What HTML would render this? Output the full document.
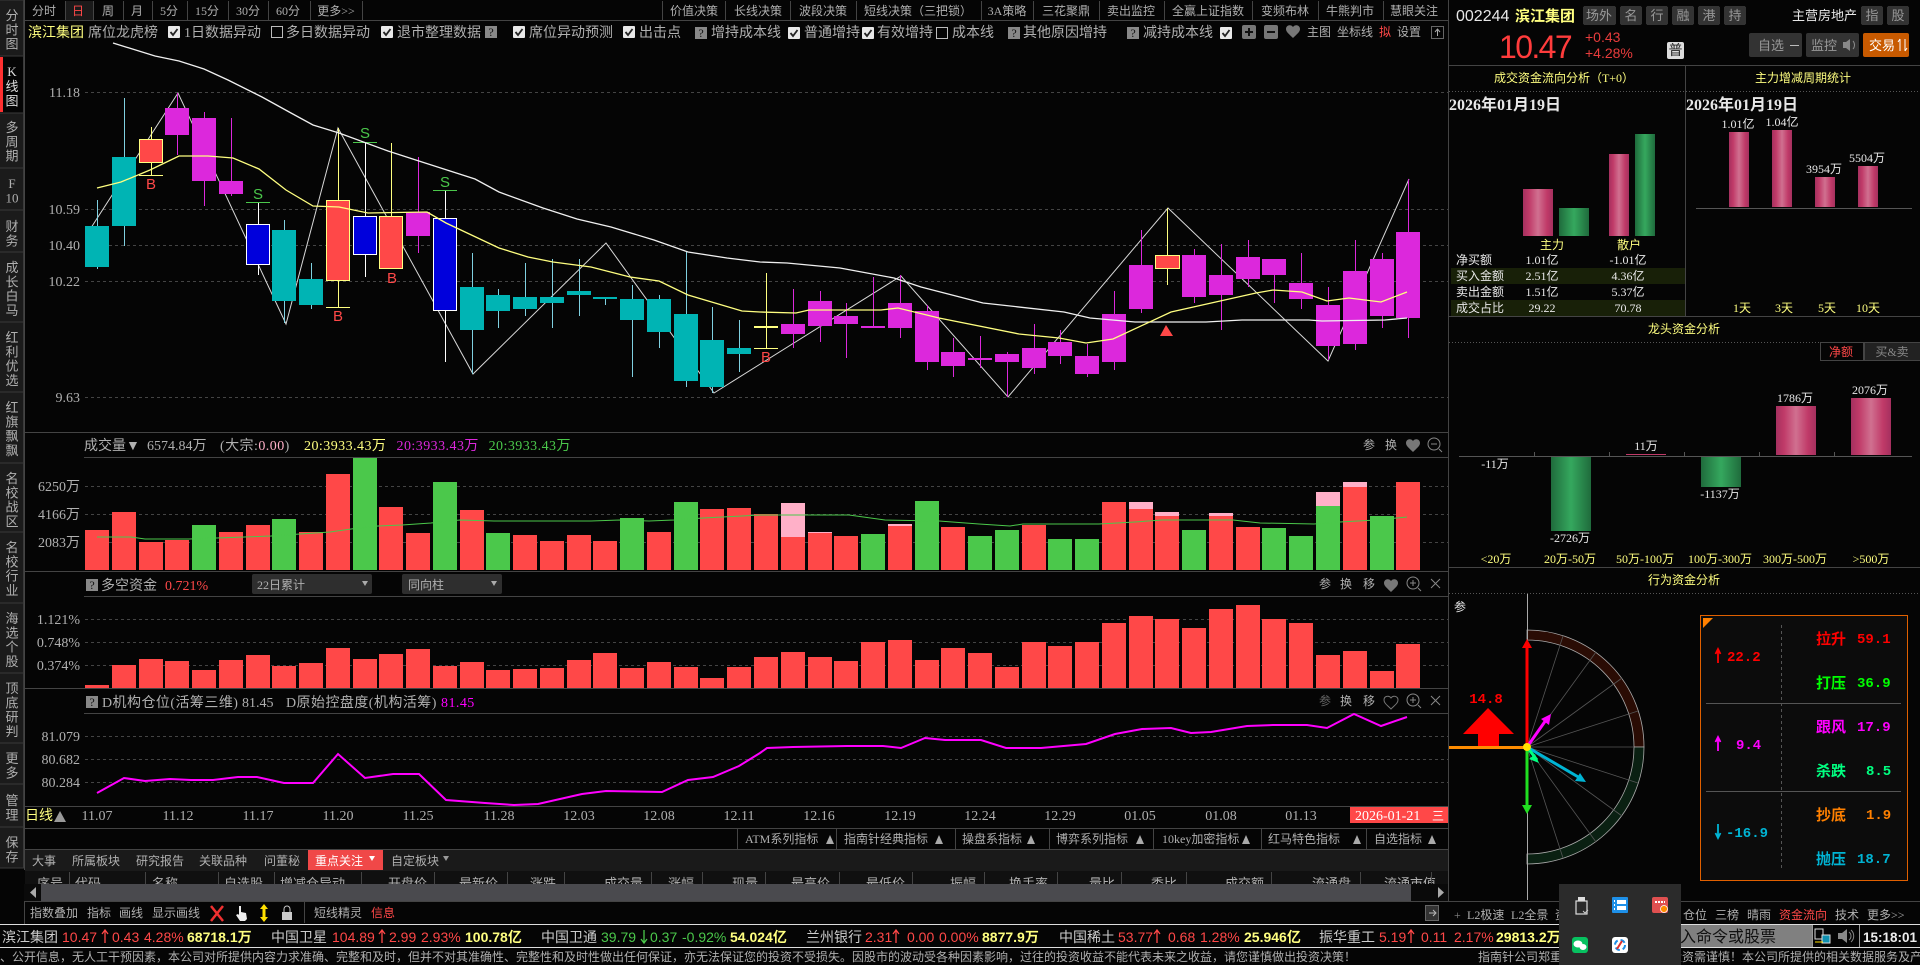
<!DOCTYPE html>
<html lang="zh"><head><meta charset="utf-8"><title>滨江集团</title>
<style>
html,body{margin:0;padding:0;background:#050505;overflow:hidden}
svg{display:block;font-family:"Liberation Serif","WenQuanYi Zen Hei","Noto Sans CJK SC",serif;font-size:14px}
.ce{text-anchor:middle}.en{text-anchor:end}
.g{fill:#b0b0b0}.y{fill:#ffff80}.w{fill:#e8e8e8}.r{fill:#ff4848}
.s12{font-size:12px}.s13{font-size:13px}.s14{font-size:14px}
.sa{font-family:"Liberation Sans","WenQuanYi Zen Hei","Noto Sans CJK SC",sans-serif}
.mo{font-family:"Liberation Mono","WenQuanYi Zen Hei","Noto Sans CJK SC",monospace;font-weight:bold}
.b{font-weight:bold}
.ls{letter-spacing:.45px}
.c{shape-rendering:crispEdges}
.ln{stroke:#444;stroke-width:1;shape-rendering:crispEdges;fill:none}
.gd{stroke:#444;stroke-width:1;stroke-dasharray:3 3;shape-rendering:crispEdges;fill:none}
</style></head><body>
<svg width="1920" height="965" viewBox="0 0 1920 965" xmlns="http://www.w3.org/2000/svg">
<defs>
<linearGradient id="gr"><stop offset="0" stop-color="#a5305f"/><stop offset=".2" stop-color="#c03a68"/><stop offset=".5" stop-color="#d07090"/><stop offset=".8" stop-color="#c03a68"/><stop offset="1" stop-color="#a5305f"/></linearGradient>
<linearGradient id="gg"><stop offset="0" stop-color="#1f6b3c"/><stop offset=".5" stop-color="#35a85e"/><stop offset="1" stop-color="#1f6b3c"/></linearGradient>
<symbol id="ck" width="12" height="12" viewBox="0 0 12 12"><rect width="12" height="12" rx="1" fill="#e8e8e8"/><path d="M2.5 6l2.5 3 4.500-6" stroke="#222" stroke-width="1.800" fill="none"/></symbol>
<symbol id="ub" width="12" height="12" viewBox="0 0 12 12"><rect x=".5" y=".5" width="11" height="11" fill="none" stroke="#bbb"/></symbol>
<symbol id="ar" width="8" height="14" viewBox="0 0 8 14"><path d="M4 14V1M1 5l3-4 3 4" stroke="#ff4848" stroke-width="1.300" fill="none"/></symbol>
<clipPath id="hc"><rect x="24" y="871" width="1424" height="13"/></clipPath>
</defs>
<rect width="1920" height="965" fill="#050505"/>

<!-- left sidebar -->
<g class="c" fill="#1b1b1b" stroke="#3a3a3a">
<rect x="-1" y="0" width="24.500" height="56"/><rect x="-1" y="56" width="24.500" height="57" fill="#050505"/><rect x="-1" y="113" width="24.500" height="55"/><rect x="-1" y="168" width="24.500" height="42"/><rect x="-1" y="210" width="24.500" height="42"/><rect x="-1" y="252" width="24.500" height="70"/><rect x="-1" y="322" width="24.500" height="70"/><rect x="-1" y="392" width="24.500" height="71"/><rect x="-1" y="463" width="24.500" height="69"/><rect x="-1" y="532" width="24.500" height="71"/><rect x="-1" y="603" width="24.500" height="70"/><rect x="-1" y="673" width="24.500" height="70"/><rect x="-1" y="743" width="24.500" height="41"/><rect x="-1" y="784" width="24.500" height="43"/><rect x="-1" y="827" width="24.500" height="41"/>
</g>
<rect x="0" y="57" width="3" height="55" fill="#ff3030"/>
<g class="s13 ce g">
<text x="12" y="20">分<tspan x="12" dy="14.300">时</tspan><tspan x="12" dy="14.300">图</tspan></text>
<text x="12" y="76" style="fill:#ddd">K<tspan x="12" dy="15">线</tspan><tspan x="12" dy="14.300">图</tspan></text>
<text x="12" y="132">多<tspan x="12" dy="14.300">周</tspan><tspan x="12" dy="14.300">期</tspan></text>
<text x="12" y="188">F<tspan x="12" dy="14.300">10</tspan></text>
<text x="12" y="231">财<tspan x="12" dy="14.300">务</tspan></text>
<text x="12" y="272">成<tspan x="12" dy="14.300">长</tspan><tspan x="12" dy="14.300">白</tspan><tspan x="12" dy="14.300">马</tspan></text>
<text x="12" y="342">红<tspan x="12" dy="14.300">利</tspan><tspan x="12" dy="14.300">优</tspan><tspan x="12" dy="14.300">选</tspan></text>
<text x="12" y="412">红<tspan x="12" dy="14.300">旗</tspan><tspan x="12" dy="14.300">飘</tspan><tspan x="12" dy="14.300">飘</tspan></text>
<text x="12" y="483">名<tspan x="12" dy="14.300">校</tspan><tspan x="12" dy="14.300">战</tspan><tspan x="12" dy="14.300">区</tspan></text>
<text x="12" y="552">名<tspan x="12" dy="14.300">校</tspan><tspan x="12" dy="14.300">行</tspan><tspan x="12" dy="14.300">业</tspan></text>
<text x="12" y="623">海<tspan x="12" dy="14.300">选</tspan><tspan x="12" dy="14.300">个</tspan><tspan x="12" dy="14.300">股</tspan></text>
<text x="12" y="693">顶<tspan x="12" dy="14.300">底</tspan><tspan x="12" dy="14.300">研</tspan><tspan x="12" dy="14.300">判</tspan></text>
<text x="12" y="763">更<tspan x="12" dy="14.300">多</tspan></text>
<text x="12" y="805">管<tspan x="12" dy="14.300">理</tspan></text>
<text x="12" y="847">保<tspan x="12" dy="14.300">存</tspan></text>
</g>

<!-- top toolbar -->
<path class="ln" d="M24 20.500H1448M24.500 0V870M65.500 1V20M93.500 1V20M123.500 1V20M152.500 1V20M187.500 1V20M228.500 1V20M268.500 1V20M310.500 1V20M362.500 1V20M662.500 1V20M725.500 1V20M790.500 1V20M856.500 1V20M981.500 1V20M1033.500 1V20M1099.500 1V20M1164.500 1V20M1252.500 1V20M1318.500 1V20M1383.500 1V20M1448.500 0V901"/>
<rect x="66" y="1" width="27" height="19" fill="#1a1a1a" class="c"/>
<g class="s12 g ce">
<text x="44" y="15">分时</text><text x="78" y="15" style="fill:#ff4848">日</text><text x="108" y="15">周</text><text x="137" y="15">月</text><text x="169" y="15">5分</text><text x="207" y="15">15分</text><text x="248" y="15">30分</text><text x="288" y="15">60分</text><text x="336" y="15">更多&gt;&gt;</text>
<text x="694" y="15">价值决策</text><text x="758" y="15">长线决策</text><text x="823" y="15">波段决策</text><text x="918" y="15">短线决策（三把锁）</text><text x="1007" y="15">3A策略</text><text x="1066" y="15">三花聚鼎</text><text x="1131" y="15">卖出监控</text><text x="1208" y="15">全赢上证指数</text><text x="1285" y="15">变频布林</text><text x="1350" y="15">牛熊判市</text><text x="1414" y="15">慧眼关注</text>
</g>

<!-- option row -->
<g class="s14 g">
<text x="28" y="37" style="fill:#ffff80">滨江集团</text>
<text x="88" y="37">席位龙虎榜</text>
<text x="184" y="37">1日数据异动</text>
<text x="286" y="37">多日数据异动</text>
<text x="397" y="37">退市整理数据</text>
<text x="529" y="37">席位异动预测</text>
<text x="639" y="37">出击点</text>
<text x="711" y="37">增持成本线</text>
<text x="804" y="37">普通增持</text>
<text x="877" y="37">有效增持</text>
<text x="952" y="37">成本线</text>
<text x="1023" y="37">其他原因增持</text>
<text x="1143" y="37">减持成本线</text>
</g>
<use href="#ck" x="168" y="26"/><use href="#ub" x="271" y="26"/><use href="#ck" x="381" y="26"/><use href="#ck" x="513" y="26"/><use href="#ck" x="623" y="26"/><use href="#ck" x="788" y="27"/><use href="#ck" x="862" y="27"/><use href="#ub" x="936" y="27"/><use href="#ck" x="1220" y="27"/>
<g class="c" fill="#888"><rect x="485" y="26" width="12" height="12"/><rect x="695" y="27" width="12" height="12"/><rect x="1008" y="27" width="12" height="12"/><rect x="1127" y="27" width="12" height="12"/></g>
<g class="s12 ce" fill="#111"><text x="491" y="36">?</text><text x="701" y="37">?</text><text x="1014" y="37">?</text><text x="1133" y="37">?</text></g>
<rect x="1242" y="25" width="14" height="14" rx="2" fill="#777"/><path d="M1249 28v8M1245 32h8" stroke="#111" stroke-width="2"/>
<rect x="1264" y="25" width="14" height="14" rx="2" fill="#777"/><path d="M1267 32h8" stroke="#111" stroke-width="2"/>
<path d="M1293 38c-4-4-7-6-7-9 0-4 5-5 7-2 2-3 7-2 7 2 0 3-3 5-7 9z" fill="#777"/>
<g class="s12 g"><text x="1307" y="36">主图</text><text x="1337" y="36">坐标线</text><text x="1379" y="36" style="fill:#ff4848">拟</text><text x="1397" y="36">设置</text></g>
<rect x="1431.500" y="26.500" width="12" height="12" fill="none" stroke="#666" class="c"/><path d="M1437.500 36v-6M1435 32l2.500-3 2.500 3" stroke="#aaa" fill="none"/>

<!-- main chart grid -->
<path class="gd" d="M85 92.500H1448M85 209.500H1448M85 245.500H1448M85 281.500H1448M85 397.500H1448"/>
<g class="s14 g en"><text x="80" y="97">11.18</text><text x="80" y="214">10.59</text><text x="80" y="250">10.40</text><text x="80" y="286">10.22</text><text x="80" y="402">9.63</text></g>

<!-- zigzag -->
<polyline fill="none" stroke="#d8d8d8" stroke-width="1" points="87,234 178,93 286,324 338,128 473,374 606,243 714,393 901,276 1008,397 1168,208 1328,361 1409,179"/>

<!-- candles -->
<g class="c">
<path stroke="#7fd0e0" fill="none" d="M97.500 200V269M124.500 98V246M284.500 220V323M311.500 263V309M472.500 253V374M498.500 289V328M525.500 263V316M552.500 259V328M579.500 259V316M605.500 297V305M632.500 285V377M659.500 295V348M686.500 251V387M712.500 307V393M739.500 320V372"/>
<path fill="#00b4b4" d="M85 226h24v41h-24zM112 157h24v69h-24zM272 230h24v71h-24zM299 279h24v26h-24zM460 287h24v43h-24zM486 295h24v16h-24zM513 297h24v12h-24zM540 297h24v6h-24zM567 291h24v4h-24zM593 297h24v2h-24zM620 299h24v21h-24zM647 299h24v33h-24zM674 314h24v67h-24zM700 340h24v47h-24zM727 348h24v6h-24z"/>
<path stroke="#dc28dc" fill="none" d="M177.500 93V155M204.500 112V206M231.500 118V196M418.500 157V253M793.500 289V348M820.500 291V342M846.500 303V358M873.500 277V328M900.500 275V338M927.500 305V370M953.500 338V377M980.500 336V368M1007.500 352V397M1034.500 324V374M1060.500 330V364M1087.500 344V377M1114.500 291V370M1141.500 230V313M1194.500 249V303M1221.500 244V330M1248.500 240V287M1274.500 259V303M1301.500 253V309M1328.500 287V360M1355.500 240V350M1382.500 253V328M1408.500 179V338"/>
<path fill="#dc28dc" d="M165 108h24v27h-24zM192 118h24v63h-24zM219 181h24v13h-24zM406 212h24v24h-24zM781 324h24v10h-24zM808 301h24v25h-24zM834 316h24v8h-24zM861 326h24v2h-24zM888 303h24v25h-24zM915 311h24v51h-24zM941 352h24v14h-24zM968 358h24v2h-24zM995 354h24v8h-24zM1022 348h24v20h-24zM1048 342h24v14h-24zM1075 356h24v18h-24zM1102 314h24v48h-24zM1129 265h24v44h-24zM1182 255h24v42h-24zM1209 275h24v20h-24zM1236 257h24v22h-24zM1262 259h24v16h-24zM1289 283h24v16h-24zM1316 305h24v41h-24zM1343 271h24v73h-24zM1370 259h24v57h-24zM1396 232h24v86h-24z"/>
<path stroke="#fff" fill="none" d="M258.500 202V275M365.500 142V277M445.500 190V362"/>
<g fill="#0000dc" stroke="#fff"><rect x="246.500" y="224.500" width="23" height="40"/><rect x="353.500" y="216.500" width="23" height="38"/><rect x="433.500" y="218.500" width="23" height="92"/></g>
<path stroke="#ffff80" fill="none" d="M151.500 127V175M338.500 128V307M391.500 143V269M766.500 273V348M1167.500 208V285M139 175.500h24M326 307.500h24M754 348.500h24"/>
<g fill="#ff4848" stroke="#ffff80"><rect x="139.500" y="139.500" width="23" height="23"/><rect x="326.500" y="200.500" width="23" height="80"/><rect x="379.500" y="216.500" width="23" height="52"/><rect x="1155.500" y="255.500" width="24" height="13"/></g>
<path stroke="#ffff80" stroke-width="2" d="M754 327h24"/>
<path stroke="#4bc84b" d="M246 202.500h24M353 142.500h24M433 190.500h24"/>
</g>
<polyline fill="none" stroke="#f0f0f0" stroke-width="1.300" points="113,43 155,56 179,61 204,69 228,80 262,97 291,113 313,125 339,133 388,151 422,162 475,179 499,192 543,208 577,219 611,227 654,240 688,252 727,258 760,262 787,263 840,268 894,278 921,287 983,303 1064,312 1090,318 1135,322 1206,322 1242,320 1309,320 1322,321 1385,320 1407,318"/>
<polyline fill="none" stroke="#ffff80" stroke-width="1.300" points="97,188 121,182 150,170 179,156 208,156 233,158 259,169 286,190 313,206 339,207 368,213 427,212 446,223 499,248 528,257 553,262 591,267 630,277 659,281 688,295 742,311 760,312 796,313 809,310 881,310 898,308 939,318 1019,334 1059,338 1086,343 1113,339 1171,312 1256,293 1273,290 1302,292 1327,301 1349,298 1381,302 1407,292"/>
<g class="sa ce" style="font-size:15px">
<text x="151" y="189" fill="#ff4848">B</text><text x="338" y="321" fill="#ff4848">B</text><text x="392" y="283" fill="#ff4848">B</text><text x="766" y="362" fill="#ff4848">B</text>
<text x="258" y="199" fill="#4bc84b">S</text><text x="365" y="138" fill="#4bc84b">S</text><text x="445" y="187" fill="#4bc84b">S</text>
</g>
<path d="M1166 325l7 11h-13z" fill="#ff4848"/>

<!-- panel borders -->
<path class="ln" d="M24 432.500H1448M84 457.500H1448M24 571.500H1448M84 596.500H1448M24 688.500H1448M84 713.500H1448M24 806.500H1448M24 828.500H1448M24 849.500H1448"/>

<!-- volume panel -->
<path class="gd" d="M85 486.500H1448M85 514.500H1448M85 542.500H1448"/>
<g class="s14">
<text x="84" y="450" class="g">成交量▼</text>
<text x="147" y="450" class="g">6574.84万</text>
<text x="220" y="450" class="g ls">(大宗:<tspan fill="#ffb0c8" style="fill:#ffb0c8">0.00</tspan>)</text>
<text x="304" y="450" class="y ls">20:3933.43万</text>
<text x="396.500" y="450" fill="#dc28dc" class="ls">20:3933.43万</text>
<text x="488.600" y="450" fill="#4bc84b" class="ls">20:3933.43万</text>
</g>
<g class="s14 g en"><text x="80" y="491">6250万</text><text x="80" y="519">4166万</text><text x="80" y="547">2083万</text></g>
<g class="c">
<path fill="#ff4848" d="M85 530h24v40h-24zM112 512h24v58h-24zM139 542h24v28h-24zM165 540h24v30h-24zM219 532h24v38h-24zM246 525h24v45h-24zM299 532h24v38h-24zM326 474h24v96h-24zM379 507h24v63h-24zM406 533h24v37h-24zM460 510h24v60h-24zM513 535h24v35h-24zM540 541h24v29h-24zM567 535h24v35h-24zM593 541h24v29h-24zM647 532h24v38h-24zM700 509h24v61h-24zM727 508h24v62h-24zM754 514h24v56h-24zM781 537h24v33h-24zM808 533h24v37h-24zM834 536h24v34h-24zM888 526h24v44h-24zM941 527h24v43h-24zM1022 525h24v45h-24zM1102 502h24v68h-24zM1129 509h24v61h-24zM1155 516h24v54h-24zM1209 516h24v54h-24zM1236 527h24v43h-24zM1343 487h24v83h-24zM1396 482h24v88h-24z"/>
<path fill="#4bc84b" d="M192 525h24v45h-24zM272 519h24v51h-24zM353 458h24v112h-24zM433 482h24v88h-24zM486 533h24v37h-24zM620 518h24v52h-24zM674 502h24v68h-24zM861 534h24v36h-24zM915 501h24v69h-24zM968 536h24v34h-24zM995 530h24v40h-24zM1048 539h24v31h-24zM1075 539h24v31h-24zM1182 530h24v40h-24zM1262 528h24v42h-24zM1289 536h24v34h-24zM1316 506h24v64h-24zM1370 516h24v54h-24z"/>
<path fill="#ffb0c8" d="M781 503h24v34h-24zM808 532h24v1h-24zM888 524h24v2h-24zM1129 502h24v7h-24zM1155 512h24v4h-24zM1209 513h24v3h-24zM1316 492h24v14h-24zM1343 482h24v5h-24z"/>
</g>
<polyline fill="none" stroke="#4bc84b" stroke-width="1" points="97,537 131,537 145,539 189,539 271,536 300,534 330,532 351,529 378,526 402,525 431,523 460,520 494,521 591,521 620,520 649,521 674,520 703,518 742,516 760,515 849,515 885,520 939,521 979,524 1010,526 1023,524 1099,524 1135,522 1162,520 1233,520 1260,523 1314,524 1340,522 1376,520 1407,517"/>

<!-- 多空资金 panel -->
<rect x="86" y="579" width="12" height="12" fill="#888" class="c"/><text x="92" y="589" class="s12 ce" fill="#111">?</text>
<text x="101" y="590" class="g s14">多空资金</text>
<text x="165" y="590" class="r s14">0.721%</text>
<rect x="252" y="574" width="120" height="20" rx="2" fill="#2e2e2e"/><text x="257" y="589" class="s12 g">22日累计</text><path d="M362 581l6 0-3 5z" fill="#aaa"/>
<rect x="402" y="574" width="100" height="20" rx="2" fill="#2e2e2e"/><text x="408" y="589" class="s12 g">同向柱</text><path d="M491 581l6 0-3 5z" fill="#aaa"/>
<path class="gd" d="M85 619.500H1448M85 642.500H1448M85 665.500H1448"/>
<g class="s14 g en"><text x="80" y="624">1.121%</text><text x="80" y="647">0.748%</text><text x="80" y="670">0.374%</text></g>
<path class="c" fill="#ff4848" d="M85 685h24v3h-24zM112 665h24v23h-24zM139 659h24v29h-24zM165 661h24v27h-24zM192 670h24v18h-24zM219 660h24v28h-24zM246 655h24v33h-24zM272 666h24v22h-24zM299 663h24v25h-24zM326 648h24v40h-24zM353 659h24v29h-24zM379 654h24v34h-24zM406 649h24v39h-24zM433 666h24v22h-24zM460 662h24v26h-24zM486 670h24v18h-24zM513 669h24v19h-24zM540 668h24v20h-24zM567 660h24v28h-24zM593 653h24v35h-24zM620 668h24v20h-24zM647 662h24v26h-24zM674 667h24v21h-24zM700 678h24v10h-24zM727 667h24v21h-24zM754 657h24v31h-24zM781 652h24v36h-24zM808 657h24v31h-24zM834 661h24v27h-24zM861 642h24v46h-24zM888 640h24v48h-24zM915 660h24v28h-24zM941 648h24v40h-24zM968 653h24v35h-24zM995 667h24v21h-24zM1022 642h24v46h-24zM1048 646h24v42h-24zM1075 642h24v46h-24zM1102 623h24v65h-24zM1129 616h24v72h-24zM1155 619h24v69h-24zM1182 628h24v60h-24zM1209 609h24v79h-24zM1236 605h24v83h-24zM1262 619h24v69h-24zM1289 623h24v65h-24zM1316 655h24v33h-24zM1343 651h24v37h-24zM1370 671h24v17h-24zM1396 644h24v44h-24z"/>

<!-- D panel -->
<rect x="86" y="696" width="12" height="12" fill="#888" class="c"/><text x="92" y="706" class="s12 ce" fill="#111">?</text>
<text x="102" y="707" class="g s14 ls">D机构仓位(活筹三维)</text><text x="242" y="707" class="g s14">81.45</text><text x="286" y="707" class="g s14 ls">D原始控盘度(机构活筹)</text><text x="441" y="707" class="s14 ls" fill="#ff00ff">81.45</text>
<path class="gd" d="M85 736.500H1448M85 759.500H1448M85 782.500H1448"/>
<g class="s14 g en"><text x="80" y="741">81.079</text><text x="80" y="764">80.682</text><text x="80" y="787">80.284</text></g>
<polyline fill="none" stroke="#ff00ff" stroke-width="2" points="97,793 124,778 145,781 170,779 191,780 213,780 238,777 257,777 284,783 313,783 338,754 365,778 393,774 419,774 446,800 485,803 514,805 538,804 582,794 606,791 662,792 688,780 713,777 739,766 760,753 767,748 793,747 847,746 883,746 901,748 925,738 945,740 981,740 1006,748 1041,748 1086,744 1115,734 1142,729 1171,728 1191,733 1211,732 1247,726 1273,725 1307,725 1327,728 1354,714 1381,726 1407,717"/>

<!-- header side icons -->
<g class="s12 g ce">
<text x="1369" y="449">参</text><text x="1391" y="449">换</text>
<text x="1325" y="588">参</text><text x="1346" y="588">换</text><text x="1369" y="588">移</text>
<text x="1325" y="705" style="fill:#666">参</text><text x="1346" y="705">换</text><text x="1369" y="705">移</text>
</g>
<path d="M1413 452c-4-4-7-6-7-9 0-4 5-5 7-2 2-3 7-2 7 2 0 3-3 5-7 9zM1391 592c-4-4-7-6-7-9 0-4 5-5 7-2 2-3 7-2 7 2 0 3-3 5-7 9z" fill="#777"/>
<path d="M1391 709c-4-4-7-6-7-9 0-4 5-5 7-2 2-3 7-2 7 2 0 3-3 5-7 9z" fill="none" stroke="#777"/>
<g fill="none" stroke="#888">
<circle cx="1434" cy="444" r="6"/><path d="M1431 444h6M1439 449l3 3"/>
<circle cx="1413" cy="583" r="6"/><path d="M1410 583h6M1413 580v6M1418 588l3 3"/>
<circle cx="1413" cy="700" r="6"/><path d="M1410 700h6M1413 697v6M1418 705l3 3"/>
<path d="M1431 579l9 9M1440 579l-9 9M1431 696l9 9M1440 696l-9 9"/>
</g>

<!-- date axis -->
<text x="25" y="820" class="y s14">日线</text><path d="M60 811l6 11h-12z" fill="#999"/>
<g class="s14 g ce">
<text x="97" y="820">11.07</text><text x="178" y="820">11.12</text><text x="258" y="820">11.17</text><text x="338" y="820">11.20</text><text x="418" y="820">11.25</text><text x="499" y="820">11.28</text><text x="579" y="820">12.03</text><text x="659" y="820">12.08</text><text x="739" y="820">12.11</text><text x="819" y="820">12.16</text><text x="900" y="820">12.19</text><text x="980" y="820">12.24</text><text x="1060" y="820">12.29</text><text x="1140" y="820">01.05</text><text x="1221" y="820">01.08</text><text x="1301" y="820">01.13</text>
</g>
<rect x="1350" y="807" width="98" height="16" fill="#ff4848" class="c"/><text x="1355" y="820" class="s14" fill="#fff">2026-01-21</text><text x="1438" y="820" class="s12 ce" fill="#fff">三</text>

<!-- indicator row -->
<path class="ln" d="M737.500 829V849M836.500 829V849M955.500 829V849M1049.500 829V849M1153.500 829V849M1261.500 829V849M1366.500 829V849"/>
<g class="s12 g">
<text x="745" y="843">ATM系列指标</text><text x="844" y="843">指南针经典指标</text><text x="962" y="843">操盘系指标</text><text x="1056" y="843">博弈系列指标</text><text x="1162" y="843">10key加密指标</text><text x="1268" y="843">红马特色指标</text><text x="1374" y="843">自选指标</text>
</g>
<path fill="#aaa" d="M826 844l4-9 4 9zM935 844l4-9 4 9zM1027 844l4-9 4 9zM1136 844l4-9 4 9zM1242 844l4-9 4 9zM1353 844l4-9 4 9zM1428 844l4-9 4 9z"/>

<!-- tabs row -->
<rect x="25" y="850" width="1423" height="21" fill="#1a1a1a" class="c"/>
<rect x="308" y="850" width="75" height="20" fill="#f04848" class="c"/>
<g class="s12 g"><text x="32" y="865">大事</text><text x="72" y="865">所属板块</text><text x="136" y="865">研究报告</text><text x="199" y="865">关联品种</text><text x="264" y="865">问董秘</text><text x="315" y="865" style="fill:#fff">重点关注</text><text x="391" y="865">自定板块</text></g>
<path d="M369 856h6l-3 5z" fill="#fff"/><path d="M443 856h6l-3 5z" fill="#999"/>

<!-- table header -->
<rect x="25" y="871" width="1423" height="13" fill="#101010" class="c"/>
<g clip-path="url(#hc)" class="s13 g">
<text x="37" y="888">序号</text><text x="75" y="888">代码</text><text x="152" y="888">名称</text><text x="224" y="888">自选股</text><text x="280" y="888">增减仓异动</text><text x="388" y="888">开盘价</text><text x="459" y="888">最新价</text><text x="530" y="888">涨跌</text><text x="604" y="888">成交量</text><text x="668" y="888">涨幅</text><text x="732" y="888">现量</text><text x="791" y="888">最高价</text><text x="866" y="888">最低价</text><text x="950" y="888">振幅</text><text x="1009" y="888">换手率</text><text x="1089" y="888">量比</text><text x="1151" y="888">委比</text><text x="1225" y="888">成交额</text><text x="1312" y="888">流通盘</text><text x="1384" y="888">流通市值</text>
</g>
<path class="ln" d="M69.500 872V884M145.500 872V884M218.500 872V884M274.500 872V884M361.500 872V884M434.500 872V884M507.500 872V884M564.500 872V884M651.500 872V884M702.500 872V884M765.500 872V884M839.500 872V884M912.500 872V884M984.500 872V884M1057.500 872V884M1121.500 872V884M1186.500 872V884M1271.500 872V884M1360.500 872V884M1431.500 872V884"/>

<!-- scrollbar -->
<rect x="24" y="884" width="1424" height="17" fill="#4a4a4e" class="c"/>
<rect x="24" y="884" width="17" height="17" fill="#0a0a0a" class="c"/><path d="M36 887v11l-6-5.500z" fill="#aaa"/>
<rect x="1411" y="884" width="37" height="17" fill="#0a0a0a" class="c"/><path d="M1438 887v11l6-5.500z" fill="#aaa"/>

<!-- bottom tool row -->
<path class="ln" d="M24 901.500H1920M304.500 902V923M24.500 901V924"/>
<g class="s12 g"><text x="30" y="917">指数叠加</text><text x="87" y="917">指标</text><text x="119" y="917">画线</text><text x="152" y="917">显示画线</text><text x="314" y="917">短线精灵</text><text x="371" y="917" style="fill:#ff4848">信息</text></g>
<path d="M211 906l12 15M223 906l-12 15" stroke="#f03030" stroke-width="2.500"/>
<path d="M239 906h2v6l5 1 1 6-2 2h-5l-4-6 2-1 1 1z" fill="#eee"/>
<path d="M264 904l4 5h-2.500v8h2.500l-4 5-4-5h2.500v-8h-2.500z" fill="#ffe000"/>
<rect x="282" y="912" width="10" height="8" fill="#ccc"/><path d="M284 912v-3a3 3 0 0 1 6 0v3" fill="none" stroke="#ccc"/>
<rect x="1425.500" y="905.500" width="13" height="15" fill="#333" stroke="#666" class="c"/><path d="M1429 913h6M1433 910l3 3-3 3" stroke="#bbb" fill="none"/>

<!-- L2 row -->
<g class="s12 g">
<text x="1454" y="919" style="fill:#888">+</text><text x="1467" y="919">L2极速</text><text x="1511" y="919">L2全景</text><text x="1555" y="919">资金</text><text x="1683" y="919">仓位</text><text x="1715" y="919">三榜</text><text x="1747" y="919">晴雨</text><text x="1779" y="919" style="fill:#ff4848">资金流向</text><text x="1835" y="919">技术</text><text x="1867" y="919">更多&gt;&gt;</text>
</g>

<!-- ticker -->
<path class="c" stroke="#ddd" d="M0 924.500H1920M0 947.500H1920"/>
<g class="s14 sa" fill="#ff4848">
<text x="2" y="942" fill="#ccc">滨江集团</text><text x="62" y="942">10.47</text><text x="112" y="942">0.43</text><text x="144" y="942">4.28%</text><text x="187" y="942" fill="#ffff80" class="b">68718.1万</text>
<text x="271" y="942" fill="#ccc">中国卫星</text><text x="332" y="942">104.89</text><text x="389" y="942">2.99</text><text x="421" y="942">2.93%</text><text x="465" y="942" fill="#ffff80" class="b">100.78亿</text>
<text x="541" y="942" fill="#ccc">中国卫通</text><text x="601" y="942" fill="#4bc84b">39.79</text><text x="650" y="942" fill="#4bc84b">0.37</text><text x="682" y="942" fill="#4bc84b">-0.92%</text><text x="730" y="942" fill="#ffff80" class="b">54.024亿</text>
<text x="806" y="942" fill="#ccc">兰州银行</text><text x="865" y="942">2.31</text><text x="907" y="942">0.00</text><text x="939" y="942">0.00%</text><text x="982" y="942" fill="#ffff80" class="b">8877.9万</text>
<text x="1059" y="942" fill="#ccc">中国稀土</text><text x="1118" y="942">53.77</text><text x="1168" y="942">0.68</text><text x="1200" y="942">1.28%</text><text x="1244" y="942" fill="#ffff80" class="b">25.946亿</text>
<text x="1319" y="942" fill="#ccc">振华重工</text><text x="1379" y="942">5.19</text><text x="1421" y="942">0.11</text><text x="1454" y="942">2.17%</text><text x="1496" y="942" fill="#ffff80" class="b">29813.2万</text>
</g>
<use href="#ar" x="101" y="929"/><use href="#ar" x="378" y="929"/><use href="#ar" x="892" y="929"/><use href="#ar" x="1153" y="929"/><use href="#ar" x="1407" y="929"/>
<path d="M644 943V930M641 939l3 4 3-4" stroke="#4bc84b" stroke-width="1.300" fill="none"/>

<!-- marquee -->
<g class="s12 g">
<text x="0" y="961">、公开信息，无人工干预因素，本公司对所提供内容力求准确、完整和及时，但并不对其准确性、完整性和及时性做出任何保证，亦无法保证您的投资不受损失。因股市的波动受各种因素影响，过往的投资收益不能代表未来之收益，请您谨慎做出投资决策！</text>
<text x="1478" y="961">指南针公司郑重提示：股市有风险，投资需谨慎！本公司所提供的相关数据服务及产</text>
</g>

<!-- right panel header -->
<text x="1456" y="21" class="sa w" style="font-size:16px">002244</text>
<text x="1515" y="21" class="y b" style="font-size:15px">滨江集团</text>
<g class="c" fill="#333"><rect x="1583" y="6" width="33" height="19" rx="2"/><rect x="1620" y="6" width="22" height="19" rx="2"/><rect x="1646" y="6" width="22" height="19" rx="2"/><rect x="1672" y="6" width="22" height="19" rx="2"/><rect x="1698" y="6" width="22" height="19" rx="2"/><rect x="1724" y="6" width="22" height="19" rx="2"/><rect x="1861" y="6" width="22" height="19" rx="2"/><rect x="1887" y="6" width="22" height="19" rx="2"/></g>
<g class="s13 ce" fill="#999"><text x="1599" y="20">场外</text><text x="1631" y="20">名</text><text x="1657" y="20">行</text><text x="1683" y="20">融</text><text x="1709" y="20">港</text><text x="1735" y="20">持</text><text x="1872" y="20">指</text><text x="1898" y="20">股</text></g>
<text x="1792" y="20" class="s13 w">主营房地产</text>
<text x="1499" y="58" class="sa" fill="#ff3c3c" style="font-size:32px;letter-spacing:-1.600px">10.47</text>
<text x="1585" y="42" class="sa s14" fill="#e83c3c">+0.43</text><text x="1585" y="58" class="sa s14" fill="#e83c3c">+4.28%</text>
<rect x="1667" y="42" width="17" height="17" rx="2" fill="#ddd"/><text x="1675.500" y="55" class="s14 ce" fill="#222">普</text>
<rect x="1749" y="33" width="53" height="24" rx="2" fill="#333"/><text x="1758" y="50" class="s13" fill="#999">自选</text><path d="M1790 45.500h9" stroke="#bbb"/>
<rect x="1806" y="33" width="53" height="24" rx="2" fill="#333"/><text x="1811" y="50" class="s13" fill="#999">监控</text><path d="M1843 42h3l4-3v12l-4-3h-3z" fill="#888"/><path d="M1853 41a6 6 0 0 1 0 8" stroke="#888" fill="none"/>
<rect x="1863" y="33" width="46" height="24" rx="2" fill="#c85a00"/><text x="1869" y="50" class="s13" fill="#fff">交易</text><path d="M1900 39v12M1905 39v12M1900 39l-2 3M1905 51l2-3" stroke="#fff" fill="none"/>

<path class="ln" d="M1449 65.500H1920M1685.500 65V316M1449 316.500H1920M1449 567.500H1920"/>
<path d="M1449 91.500H1920M1449 342.500H1920M1449 593.500H1920" stroke="#555" stroke-dasharray="1 2" class="c" fill="none"/>
<g class="s12 y ce"><text x="1564" y="82">成交资金流向分析（T+0）</text><text x="1803" y="82">主力增减周期统计</text><text x="1684" y="333">龙头资金分析</text><text x="1684" y="584">行为资金分析</text></g>
<text x="1449" y="110" class="w b" style="font-size:16px">2026年01月19日</text>
<text x="1686" y="110" class="w b" style="font-size:16px">2026年01月19日</text>

<!-- fund bars -->
<g class="c">
<rect x="1523" y="189" width="30" height="47" fill="url(#gr)"/><rect x="1559" y="208" width="30" height="28" fill="url(#gg)"/><rect x="1609" y="154" width="20" height="82" fill="url(#gr)"/><rect x="1635" y="134" width="20" height="102" fill="url(#gg)"/>
<rect x="1451" y="268" width="234" height="16" fill="#182008"/><rect x="1451" y="300" width="234" height="16" fill="#182008"/>
<rect x="1729" y="132" width="20" height="75" fill="url(#gr)"/><rect x="1772" y="130" width="20" height="77" fill="url(#gr)"/><rect x="1815" y="177" width="20" height="30" fill="url(#gr)"/><rect x="1858" y="166" width="20" height="41" fill="url(#gr)"/>
<path d="M1696 208.500H1912" stroke="#555"/>
</g>
<g class="s12 y ce"><text x="1552" y="249">主力</text><text x="1629" y="249">散户</text></g>
<g class="s12 w"><text x="1456" y="264">净买额</text><text x="1456" y="280">买入金额</text><text x="1456" y="296">卖出金额</text><text x="1456" y="312">成交占比</text></g>
<g class="s12 w ce">
<text x="1542" y="264">1.01亿</text><text x="1628" y="264">-1.01亿</text><text x="1542" y="280">2.51亿</text><text x="1628" y="280">4.36亿</text><text x="1542" y="296">1.51亿</text><text x="1628" y="296">5.37亿</text><text x="1542" y="312">29.22</text><text x="1628" y="312">70.78</text>
<text x="1738" y="128">1.01亿</text><text x="1782" y="126">1.04亿</text><text x="1824" y="173">3954万</text><text x="1867" y="162">5504万</text>
</g>
<g class="s12 y ce"><text x="1742" y="312">1天</text><text x="1784" y="312">3天</text><text x="1827" y="312">5天</text><text x="1868" y="312">10天</text></g>

<!-- 龙头 -->
<rect x="1820.500" y="342.500" width="43" height="18" fill="none" stroke="#444" class="c"/><rect x="1864.500" y="342.500" width="56" height="18" fill="#222" stroke="#444" class="c"/>
<text x="1841" y="356" class="s12 ce r">净额</text><text x="1892" y="356" class="s12 ce" fill="#888">买&amp;卖</text>
<g class="c">
<path d="M1459 456.500H1912M1534.500 452V456M1609.500 452V456M1684.500 452V456M1759.500 452V456M1834.500 452V456" stroke="#555" fill="none"/>
<rect x="1551" y="457" width="40" height="74" fill="url(#gg)"/><rect x="1626" y="454" width="40" height="1" fill="#c03a68"/><rect x="1701" y="457" width="40" height="30" fill="url(#gg)"/><rect x="1776" y="406" width="40" height="49" fill="url(#gr)"/><rect x="1851" y="398" width="40" height="57" fill="url(#gr)"/>
</g>
<g class="s12 w ce"><text x="1495" y="468">-11万</text><text x="1570" y="542">-2726万</text><text x="1646" y="450">11万</text><text x="1720" y="498">-1137万</text><text x="1795" y="402">1786万</text><text x="1870" y="394">2076万</text></g>
<g class="s12 y ce"><text x="1496" y="563">&lt;20万</text><text x="1570" y="563">20万-50万</text><text x="1645" y="563">50万-100万</text><text x="1720" y="563">100万-300万</text><text x="1795" y="563">300万-500万</text><text x="1871" y="563">&gt;500万</text></g>

<!-- gauge -->
<text x="1454" y="611" class="s12 w">参</text>
<path d="M1527 630A117 117 0 0 1 1644 747H1634A107 107 0 0 0 1527 640Z" fill="#2a0c04" stroke="#aaa" stroke-width=".8"/>
<path d="M1527 864A117 117 0 0 0 1644 747H1634A107 107 0 0 1 1527 854Z" fill="#0a2012" stroke="#aaa" stroke-width=".8"/>
<path d="M1527 747L1638 711M1527 747L1622 678M1527 747L1596 652M1527 747L1563 636M1527 747H1634M1527 747L1638 783M1527 747L1622 816M1527 747L1596 842M1527 747L1563 858" stroke="#555" stroke-width=".8" fill="none"/>
<path d="M1527.500 594V900" stroke="#aaa" class="c"/>
<path d="M1449 747.500H1527" stroke="#ff8c00" stroke-width="3"/>
<path d="M1527 747V646" stroke="#ff0000" stroke-width="3"/><path d="M1527 639l5 9h-10z" fill="#ff0000"/>
<path d="M1527 747V808" stroke="#20e020" stroke-width="3"/><path d="M1527 814l5-9h-10z" fill="#20e020"/>
<path d="M1527 747L1546 720" stroke="#ff00ff" stroke-width="3"/><path d="M1551 714l-2 11-8-6z" fill="#ff00ff"/>
<path d="M1527 747L1580 778" stroke="#00b4d4" stroke-width="3"/><path d="M1586 782l-11-1 5-8z" fill="#00b4d4"/>
<path d="M1527 747L1537 760" stroke="#00ff80" stroke-width="3"/><path d="M1539 763l-10-4 6-5z" fill="#00ff80"/>
<circle cx="1527" cy="747" r="4" fill="#ffe000"/>
<path d="M1488 708l26 26h-15v12h-21v-12h-15z" fill="#ff0000"/>
<text x="1486" y="703" class="mo s14 ce" fill="#ff0000">14.8</text>

<!-- stat box -->
<rect x="1700.500" y="615.500" width="207" height="265" fill="#0c0c0c" stroke="#e06000" class="c"/>
<path d="M1703 618h10l-10 10z" fill="#ff8000"/>
<path d="M1706 703.500H1901M1706 791.500H1901" stroke="#555" class="c"/>
<path d="M1781.500 625V868" stroke="#555" stroke-dasharray="3 3" class="c"/>
<g class="mo" style="font-size:15px">
<text x="1816" y="644" fill="#ff0000">拉升</text><text x="1857" y="643" fill="#ff0000" class="s14">59.1</text>
<text x="1816" y="688" fill="#00ff00">打压</text><text x="1857" y="687" fill="#00ff00" class="s14">36.9</text>
<text x="1816" y="732" fill="#ff00ff">跟风</text><text x="1857" y="731" fill="#ff00ff" class="s14">17.9</text>
<text x="1816" y="776" fill="#00ff80">杀跌</text><text x="1866" y="775" fill="#00ff80" class="s14">8.5</text>
<text x="1816" y="820" fill="#ff8000">抄底</text><text x="1866" y="819" fill="#ff8000" class="s14">1.9</text>
<text x="1816" y="864" fill="#00b4d4">抛压</text><text x="1857" y="863" fill="#00b4d4" class="s14">18.7</text>
<text x="1727" y="661" fill="#ff0000" class="s14">22.2</text>
<text x="1736" y="749" fill="#ff00ff" class="s14">9.4</text>
<text x="1726" y="837" fill="#00b4d4" class="s14">-16.9</text>
</g>
<path d="M1718 663V649M1715.500 654l2.500-5 2.500 5" stroke="#ff0000" stroke-width="1.800" fill="none"/>
<path d="M1718 751V737M1715.500 742l2.500-5 2.500 5" stroke="#ff00ff" stroke-width="1.800" fill="none"/>
<path d="M1718 824V838M1715.500 833l2.500 5 2.500-5" stroke="#00b4d4" stroke-width="1.800" fill="none"/>

<!-- command input + status -->
<rect x="1681" y="925" width="131" height="22" fill="#808080" class="c"/>
<text x="1664" y="942" style="font-size:16px" fill="#111" class="sa">输入命令或股票</text>
<rect x="1812" y="925" width="47" height="22" fill="#050505" class="c"/>
<path class="c" stroke="#999" d="M1812.500 925V947M1859.500 925V947"/>
<rect x="1815" y="929" width="8" height="10" fill="none" stroke="#ddd"/><rect x="1822" y="935" width="8" height="8" fill="#1090b0" stroke="#ddd"/><path d="M1815 942h8" stroke="#ffe000"/>
<path d="M1838 933h4l5-4v14l-5-4h-4z" fill="#888"/><path d="M1849 932a5 5 0 0 1 0 8M1851 930a8 8 0 0 1 0 12" stroke="#888" fill="none"/>
<text x="1863" y="942" class="sa b" fill="#eee" style="font-size:13.500px">15:18:01</text>

<!-- tray popup -->
<rect x="1559" y="884" width="122" height="81" fill="#2b2b2b"/>
<rect x="1576" y="901" width="11" height="13" fill="none" stroke="#ddd" stroke-width="1.200"/><rect x="1578" y="897" width="7" height="4" fill="#ddd"/><path d="M1583 911l2 2 3-3" stroke="#ccc" fill="none"/>
<rect x="1612" y="897" width="16" height="16" rx="1" fill="#1e90e8"/><path d="M1617 900h9v4h-9zM1617 906h9v4h-9z" fill="#fff"/><path d="M1614 900h1v2h-1zM1614 904h1v2h-1zM1614 908h1v2h-1z" fill="#fff"/>
<rect x="1652" y="897" width="16" height="16" rx="2" fill="#e05050"/><path d="M1655 902h10" stroke="#fff" stroke-dasharray="2 1" stroke-width="2"/><circle cx="1664" cy="909" r="3.500" fill="#ff8c00" stroke="#fff" stroke-width=".8"/>
<rect x="1572" y="937" width="16" height="16" rx="3" fill="#07c160"/><ellipse cx="1578" cy="944" rx="4.500" ry="3.500" fill="#fff"/><ellipse cx="1583" cy="947" rx="3.500" ry="3" fill="#fff"/>
<rect x="1612" y="937" width="16" height="16" rx="3" fill="#fff"/><circle cx="1620" cy="945" r="5" fill="none" stroke="#1e90e8" stroke-width="2" stroke-dasharray="5 3"/><path d="M1617 949l5-8" stroke="#e03030" stroke-width="2"/>
</svg>
</body></html>
